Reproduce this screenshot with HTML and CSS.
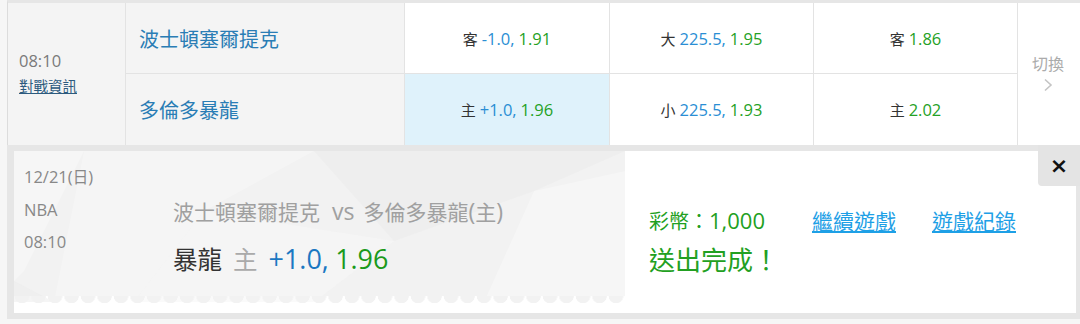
FILE: index.html
```html
<!DOCTYPE html>
<html lang="zh-Hant">
<head>
<meta charset="utf-8">
<title>投注</title>
<link rel="stylesheet" href="styles.css">
</head>
<body>
<div class="board">
  <div class="match">
    <div class="time-cell">
      <div class="time">08:10</div>
      <a class="info" href="#">對戰資訊</a>
    </div>
    <div class="team">波士頓塞爾提克</div>
    <div class="odd"><span class="odd-txt"><span class="k">客</span> <span class="n line">-1.0,</span> <span class="n price">1.91</span></span></div>
    <div class="odd"><span class="odd-txt"><span class="k">大</span> <span class="n line">225.5,</span> <span class="n price">1.95</span></span></div>
    <div class="odd"><span class="odd-txt"><span class="k">客</span> <span class="n price">1.86</span></span></div>
    <div class="switch">
      <span>切換</span>
      <svg class="chev" width="10" height="14" viewBox="0 0 10 14"><polyline points="2,1.5 8,7 2,12.5" fill="none" stroke="#c4c4c4" stroke-width="1.6"/></svg>
    </div>
    <div class="team">多倫多暴龍</div>
    <div class="odd selected"><span class="odd-txt"><span class="k">主</span> <span class="n line">+1.0,</span> <span class="n price">1.96</span></span></div>
    <div class="odd"><span class="odd-txt"><span class="k">小</span> <span class="n line">225.5,</span> <span class="n price">1.93</span></span></div>
    <div class="odd"><span class="odd-txt"><span class="k">主</span> <span class="n price">2.02</span></span></div>
  </div>

  <div class="panel">
    <div class="panel-inner">
      <div class="ticket">
        <svg class="ticket-bg" width="611" height="151" viewBox="0 0 611 151" preserveAspectRatio="none">
          <polygon points="0,0 70,0 10,120 0,130" fill="#ffffff" opacity="0.35"/>
          <polygon points="70,0 300,0 190,60 120,151 40,151" fill="#ffffff" opacity="0.25"/>
          <polygon points="300,0 611,0 520,40 380,90" fill="#e9e9e9" opacity="0.45"/>
          <polygon points="190,60 380,90 300,151 120,151" fill="#f7f7f7" opacity="0.6"/>
          <polygon points="520,40 611,20 611,151 470,151" fill="#ffffff" opacity="0.3"/>
          <polygon points="0,130 40,151 0,151" fill="#ebebeb" opacity="0.5"/>
        </svg>
        <div class="t-meta">
          <div><span class="n">12/21(</span>日<span class="n">)</span></div>
          <div class="n">NBA</div>
          <div class="n">08:10</div>
        </div>
        <div class="t-main">
          <div class="t-teams">波士頓塞爾提克<span class="vs n">vs</span>多倫多暴龍<span class="n">(</span>主<span class="n">)</span></div>
          <div class="t-pick"><span class="pick-team">暴龍</span><span class="pick-side">主</span><span class="n pick-line">+1.0,</span> <span class="n pick-price">1.96</span></div>
        </div>
      </div>
      <div class="result">
        <div class="status">
          <div class="coins">彩幣：<span class="n">1,000</span></div>
          <div class="done">送出完成！</div>
        </div>
        <div class="links">
          <a href="#">繼續遊戲</a>
          <a href="#">遊戲紀錄</a>
        </div>
      </div>
    </div>
    <button class="close" type="button">×</button>
  </div>
</div>
</body>
</html>
```

FILE: styles.css
```css
* { box-sizing: border-box; }

body {
  margin: 0;
  background: #f6f6f6;
  font-family: "Open Sans", "Noto Sans CJK TC", sans-serif;
  color: #333;
  height: 324px;
  overflow: hidden;
}

/* Latin glyphs in the original UI font run larger than the CJK ones */
.n { font-size: 1.1em; }

.board {
  margin-left: 7px;
}

.match {
  display: grid;
  grid-template-columns: 117px 278px 204px 203px 203px 1fr;
  grid-template-rows: 70px 71px;
  gap: 1px;
  background: #e3e3e3;
  border-top: 3px solid #e6e6e6;
  border-left: 1px solid #dcdcdc;
}

.time-cell {
  grid-row: 1 / 3;
  grid-column: 1;
  background: #f4f4f4;
  display: flex;
  flex-direction: column;
  justify-content: center;
  align-items: flex-start;
  padding-left: 11px;
}

.time {
  font-size: 16.5px;
  line-height: 26px;
  color: #7a7a7a;
}

.info {
  font-size: 14.5px;
  line-height: 26px;
  color: #2c5a7e;
  text-decoration: underline;
}

.team {
  background: #f4f4f4;
  display: flex;
  align-items: center;
  padding-left: 13px;
  font-size: 20px;
  color: #2a7db5;
}

.odd {
  background: #fff;
  display: flex;
  align-items: center;
  justify-content: center;
  font-size: 15px;
}

.odd-txt { white-space: nowrap; }

.odd.selected { background: #dff2fb; }

.odd .k { color: #333; }
.odd .line { color: #2a8ed4; }
.odd .price { color: #25a125; }

.switch {
  grid-row: 1 / 3;
  grid-column: 6;
  background: #fff;
  display: flex;
  flex-direction: column;
  align-items: center;
  justify-content: center;
  font-size: 16px;
  color: #ababab;
  padding-bottom: 6px;
  padding-right: 2px;
}

.chev { margin-top: 3px; }

.panel {
  position: relative;
  background: #e6e6e6;
  padding: 6px 4px 6px 7px;
}

.panel-inner {
  background: #fff;
  height: 162px;
  display: flex;
  align-items: flex-start;
}

.ticket {
  position: relative;
  width: 611px;
  height: 145px;
  background: #f2f2f2;
  display: flex;
  flex-shrink: 0;
}

.ticket::after {
  content: "";
  position: absolute;
  left: 0;
  right: 0;
  top: 145px;
  height: 7px;
  background: radial-gradient(circle at 8px 0, #f2f2f2 7px, rgba(242,242,242,0) 7.6px) repeat-x;
  background-size: 16.5px 7px;
}

.ticket-bg {
  position: absolute;
  left: 0;
  top: 0;
}

.t-meta {
  position: relative;
  width: 159px;
  padding: 10px 0 0 10px;
  font-size: 15.5px;
  line-height: 32.5px;
  color: #888;
}

.t-meta .n { font-size: 16.5px; }

.t-main {
  position: relative;
  padding-top: 46px;
}

.t-teams {
  font-size: 21px;
  line-height: 28px;
  color: #a0a0a0;
  white-space: nowrap;
}

.vs {
  margin: 0 9px 0 12px;
}

.t-pick {
  margin-top: 16px;
  font-size: 24.5px;
  line-height: 34px;
  white-space: nowrap;
}

.pick-team { color: #333; }
.pick-side { color: #aaa; margin: 0 11px; }
.pick-line { color: #1b78c2; }
.pick-price { color: #1b9a1b; }

.result {
  display: flex;
  align-items: flex-start;
  padding: 55px 0 0 24px;
}

.status {
  width: 163px;
  color: #22a022;
}

.coins {
  font-size: 20px;
  line-height: 28px;
}

.done {
  margin-top: 6px;
  font-size: 26px;
  line-height: 36px;
}

.links {
  display: flex;
  gap: 36px;
  padding-top: 1px;
}

.links a {
  font-size: 21px;
  line-height: 28px;
  color: #1ea0e6;
  text-decoration: underline;
}

.close {
  position: absolute;
  top: 0;
  right: 0;
  width: 42px;
  height: 41px;
  border: 0;
  border-bottom-left-radius: 4px;
  background: #e4e4e4;
  font-family: "DejaVu Sans", sans-serif;
  font-size: 22px;
  font-weight: bold;
  line-height: 1;
  color: #111;
  padding: 0;
}
```
